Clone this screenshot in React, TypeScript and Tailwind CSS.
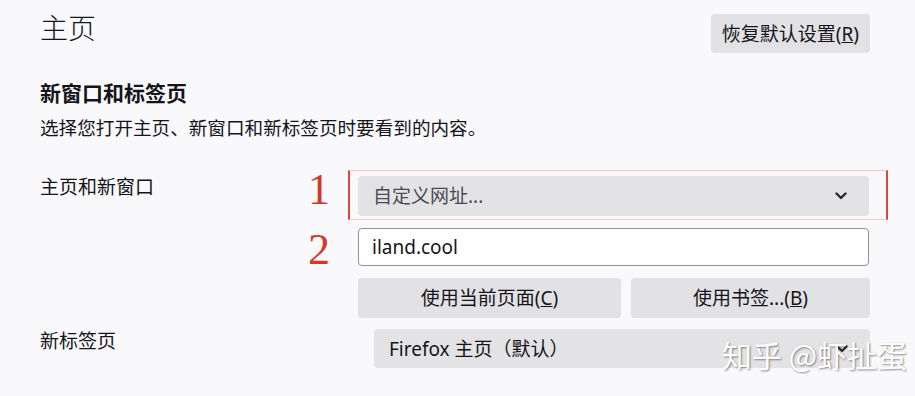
const font = "font-['Noto_Sans','Noto_Sans_CJK_SC',sans-serif]";

function Chevron() {
  return (
    <svg width="12" height="8" viewBox="0 0 12 8" className="shrink-0">
      <path d="M1.5 1.5 6 6l4.5-4.5" fill="none" stroke="#2b2a33" strokeWidth="2.4" strokeLinecap="round" strokeLinejoin="round" />
    </svg>
  );
}

function Num({ n }: { n: string }) {
  return (
    <div className="h-[38px] w-[36px] shrink-0 -translate-x-[4px] font-['Liberation_Serif',serif] text-[44px] leading-[44px] text-[#d7372a]">
      {n}
    </div>
  );
}

export default function App() {
  return (
    <div className={`${font} relative h-[396px] w-[915px] overflow-hidden bg-[#f9f9fb] pl-[40px] pt-[14px] text-[#15141a]`}>
      {/* header */}
      <div className="flex w-[830px] items-start justify-between">
        <h1 className="text-[28px] font-light leading-[28px]">主页</h1>
        <button className="h-[39px] rounded-[4px] bg-[#e2e2e5] px-[11px] text-[19px] leading-[26px]">
          恢复默认设置(<u>R</u>)
        </button>
      </div>

      <h2 className="mt-[26px] text-[21px] font-bold leading-[28px]">新窗口和标签页</h2>
      <p className="mt-[8px] text-[18.6px] leading-[26px]">选择您打开主页、新窗口和新标签页时要看到的内容。</p>

      {/* row 1 */}
      <div className="mt-[29px] flex items-start">
        <div className="w-[272px] shrink-0 pt-[4px] text-[19px] leading-[26px]">主页和新窗口</div>
        <div className="-mt-[2px]">
          <Num n="1" />
        </div>
        <div className="w-[540px] border-x-2 border-y border-x-[#d9493b] border-y-[#f3c6c2] pb-[3px] pl-[8px] pr-[17px] pt-[5px]">
          <div className="flex h-[40px] items-center justify-between rounded-[4px] bg-[#e3e3e5] pl-[15px] pr-[22px]">
            <span className="text-[19px] leading-[26px] text-[#4b4a52]">自定义网址...</span>
            <Chevron />
          </div>
        </div>
      </div>

      {/* row 2 */}
      <div className="mt-[8px] flex items-start">
        <div className="w-[272px] shrink-0" />
        <Num n="2" />
        <div className="ml-[10px] flex h-[38px] w-[511px] items-center rounded-[4px] border border-[#8f8f9d] bg-white pl-[13px] text-[19px] leading-[26px]">
          iland.cool
        </div>
      </div>

      {/* row 3 */}
      <div className="mt-[12px] flex gap-[10px] pl-[318px]">
        <button className="h-[40px] w-[263px] rounded-[4px] bg-[#e2e2e5] text-[19px] leading-[26px]">
          使用当前页面(<u>C</u>)
        </button>
        <button className="h-[40px] w-[239px] rounded-[4px] bg-[#e2e2e5] text-[19px] leading-[26px]">
          使用书签...(<u>B</u>)
        </button>
      </div>

      {/* row 4 */}
      <div className="mt-[10px] flex items-start">
        <div className="w-[334px] shrink-0 text-[19px] leading-[26px]">新标签页</div>
        <div className="mt-[1px] flex h-[39px] w-[496px] items-center justify-between rounded-[4px] bg-[#e3e3e5] pl-[15px] pr-[22px]">
          <span className="text-[19px] leading-[26px]">Firefox 主页（默认）</span>
          <Chevron />
        </div>
      </div>

      {/* watermark */}
      <div className="absolute left-[722px] top-[337px] whitespace-nowrap font-['Noto_Sans_CJK_SC',sans-serif] text-[30px] leading-[34px] text-white [text-shadow:1px_1px_2px_rgba(0,0,0,0.45)]">
        知乎 @虾扯蛋
      </div>
    </div>
  );
}
